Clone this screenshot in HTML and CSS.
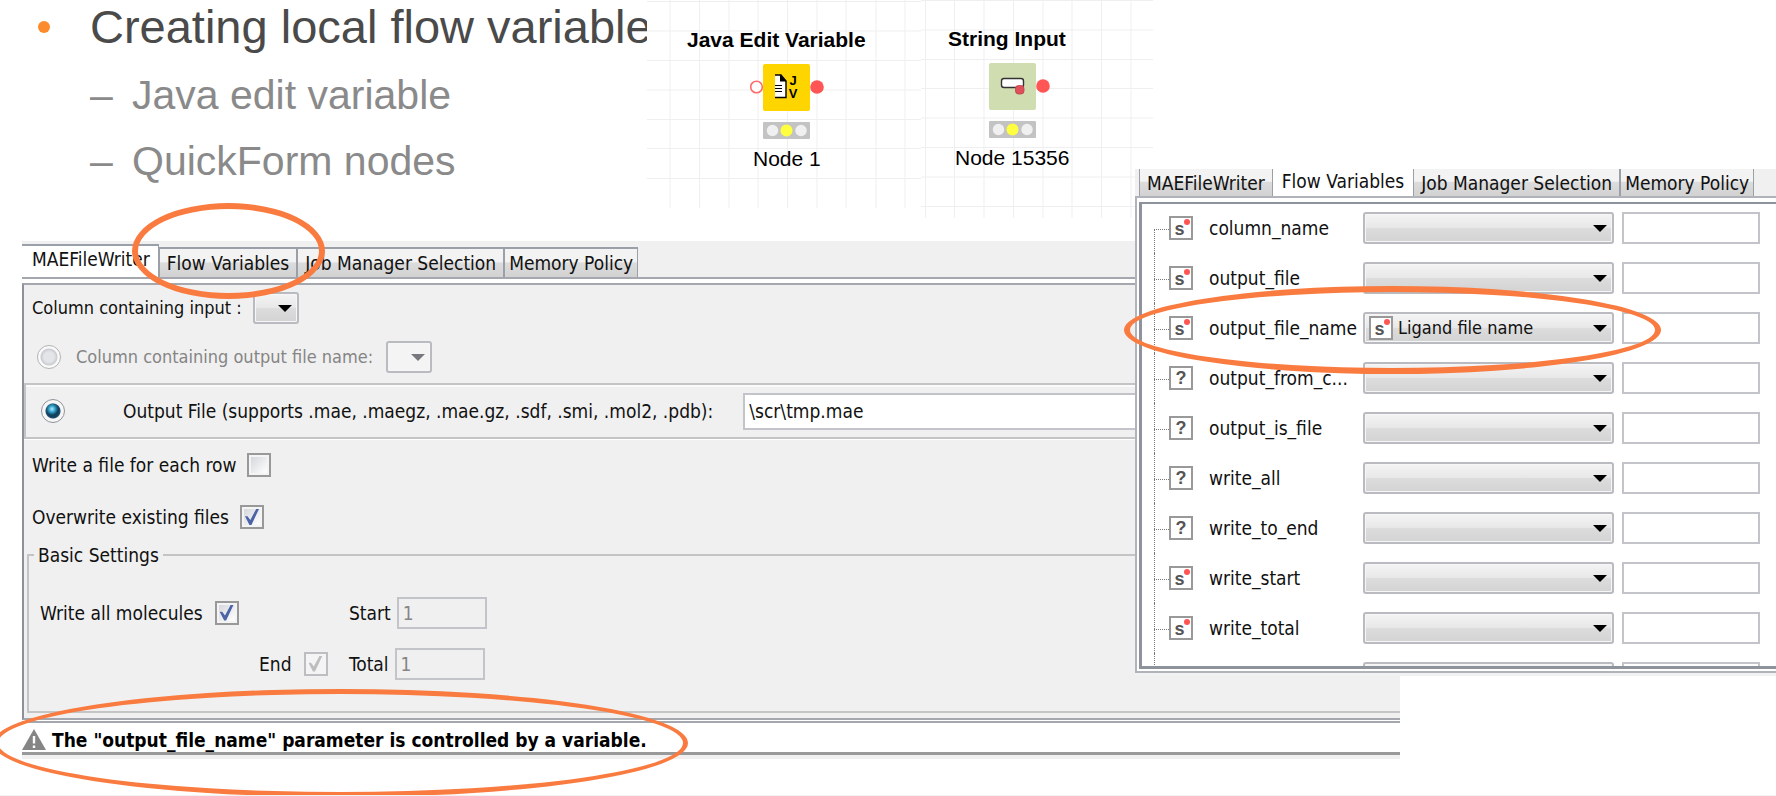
FILE: index.html
```html
<!DOCTYPE html>
<html lang="en">
<head>
<meta charset="utf-8">
<title>Creating local flow variables</title>
<link rel="stylesheet" href="styles.css">
</head>
<body>
<main class="slide">
  <ul class="outline">
    <li class="topic"><h1 class="topic-title">Creating local flow variable</h1>
      <ul class="subtopics">
        <li class="subtopic">Java edit variable</li>
        <li class="subtopic">QuickForm nodes</li>
      </ul>
    </li>
  </ul>

  <section class="canvas canvas-java">
    <svg class="grid" width="274" height="208" aria-hidden="true">
      <path d="M0 1.5H274M0 31H274M0 60.5H274M0 90H274M0 119.500H274M0 148.500H274M0 178.500H274M23 0V208M52.500 0V208M82 0V208M111 0V208M140.500 0V208M170 0V208M199 0V208M229 0V208M258 0V208"/>
    </svg>
    <div class="node node-java">
      <h2 class="node-title">Java Edit Variable</h2>
      <svg class="node-icon" width="74" height="76" viewBox="0 0 74 76" role="img" aria-label="Java Edit Variable node">
        <circle cx="6.500" cy="23" r="5.800" fill="#fff" stroke="#ff6b6b" stroke-width="1.600"/>
        <circle cx="67" cy="23" r="6.800" fill="#ff5555"/>
        <rect x="13" y="0" width="47" height="47" rx="2" fill="#ffd500"/>
        <path d="M25 11H32L36 16V33H25Z" fill="#fff"/>
        <path d="M25 11H31L36 17V33.500H25" fill="none" stroke="#000" stroke-width="1.400"/>
        <path d="M30 10.500V17.500H36.500Z" fill="#000"/>
        <path d="M25 21.500H32M25 24.500H32M25 27.500H32" stroke="#000" stroke-width="1.200"/>
        <text class="glyph" x="43" y="21" text-anchor="middle">J</text>
        <text class="glyph" x="43" y="34" text-anchor="middle">V</text>
        <rect x="13" y="58" width="47" height="17" rx="1" fill="#c3c3c3"/>
        <circle cx="22.500" cy="66.500" r="5.700" fill="#f0f0f0"/>
        <circle cx="36.500" cy="66.500" r="6" fill="#ffff40"/>
        <circle cx="51" cy="66.500" r="5.700" fill="#f0f0f0"/>
      </svg>
      <p class="node-label">Node 1</p>
    </div>
  </section>

  <section class="canvas canvas-string">
    <svg class="grid" width="232" height="218" aria-hidden="true">
      <path d="M0 .5H232M0 30H232M0 59.500H232M0 88.500H232M0 118H232M0 147.500H232M0 177H232M0 206.500H232M4.500 0V218M33.500 0V218M63 0V218M92.500 0V218M122 0V218M151 0V218M180.500 0V218M210 0V218"/>
    </svg>
    <div class="node node-string">
      <h2 class="node-title">String Input</h2>
      <svg class="node-icon" width="74" height="76" viewBox="0 0 74 76" role="img" aria-label="String Input node">
        <circle cx="67" cy="23" r="6.800" fill="#ff5555"/>
        <rect x="13" y="0" width="47" height="47" rx="2" fill="#d0ddb0"/>
        <rect x="25.500" y="15.500" width="22" height="9" rx="2.500" fill="#fff" stroke="#333" stroke-width="1.400"/>
        <rect x="39.500" y="22.500" width="8.500" height="8.500" rx="3" fill="#e0505a" stroke="#b8444a" stroke-width=".8"/>
        <rect x="13" y="58" width="47" height="17" rx="1" fill="#c3c3c3"/>
        <circle cx="22.500" cy="66.500" r="5.700" fill="#f0f0f0"/>
        <circle cx="36.500" cy="66.500" r="6" fill="#ffff40"/>
        <circle cx="51" cy="66.500" r="5.700" fill="#f0f0f0"/>
      </svg>
      <p class="node-label">Node 15356</p>
    </div>
  </section>

  <section class="dialog">
    <nav class="tabs">
      <button class="tab tab-active" type="button">MAEFileWriter</button>
      <button class="tab" type="button">Flow Variables</button>
      <button class="tab" type="button">Job Manager Selection</button>
      <button class="tab" type="button">Memory Policy</button>
    </nav>
    <div class="panel">
      <form class="settings">
        <div class="row row-first">
          <label for="incol">Column containing input :</label>
          <span class="combo combo-small"><select id="incol"><option></option></select></span>
        </div>
        <div class="row row-column">
          <input class="radio" type="radio" name="target" id="bycol" disabled>
          <label class="muted" for="bycol">Column containing output file name:</label>
          <span class="combo combo-small combo-disabled"><select aria-label="Output file name column" disabled><option></option></select></span>
        </div>
        <div class="row row-file">
          <input class="radio" type="radio" name="target" id="byfile" checked>
          <label class="file-label" for="byfile">Output File (supports .mae, .maegz, .mae.gz, .sdf, .smi, .mol2, .pdb):</label>
          <input class="field file-field" type="text" value="\scr\tmp.mae" aria-label="Output file">
        </div>
        <div class="row row-check">
          <label for="each">Write a file for each row</label>
          <input class="check" type="checkbox" id="each">
        </div>
        <div class="row row-check">
          <label for="over">Overwrite existing files</label>
          <input class="check" type="checkbox" id="over" checked>
        </div>
        <fieldset class="basic">
          <legend>Basic Settings</legend>
          <div class="basic-grid">
            <div class="pair pair-all">
              <label for="all">Write all molecules</label>
              <input class="check" type="checkbox" id="all" checked>
            </div>
            <div class="pair-field pair-last">
              <label for="start">Start</label>
              <input class="field num" type="text" id="start" value="1" disabled>
            </div>
            <div class="pair pair-end">
              <label for="end">End</label>
              <input class="check" type="checkbox" id="end" checked disabled>
            </div>
            <div class="pair-field pair-last">
              <label for="total">Total</label>
              <input class="field num" type="text" id="total" value="1" disabled>
            </div>
          </div>
        </fieldset>
      </form>
    </div>
    <div class="status">
      <svg class="warn" width="24" height="22" viewBox="0 0 24 22" aria-hidden="true">
        <path d="M12 0L24 21H0Z" fill="#858585"/>
        <path d="M12 7V14.500M12 16.500V19" stroke="#fff" stroke-width="2.400"/>
      </svg>
      <p class="status-text">The "output_file_name" parameter is controlled by a variable.</p>
      <span class="ring ring-status"></span>
    </div>
    <span class="ring ring-tab"></span>
  </section>

  <section class="variables">
    <nav class="tabs tabs-cut">
      <button class="tab" type="button">MAEFileWriter</button>
      <button class="tab tab-active" type="button">Flow Variables</button>
      <button class="tab" type="button">Job Manager Selection</button>
      <button class="tab" type="button">Memory Policy</button>
    </nav>
    <div class="var-frame">
      <ul class="var-list">
        <li class="var"><span class="type type-s">s</span><label for="v1">column_name</label><span class="combo"><select id="v1"><option></option></select></span><input class="field" type="text" aria-label="column_name variable"></li>
        <li class="var"><span class="type type-s">s</span><label for="v2">output_file</label><span class="combo"><select id="v2"><option></option></select></span><input class="field" type="text" aria-label="output_file variable"></li>
        <li class="var"><span class="type type-s">s</span><label for="v3">output_file_name</label><span class="combo combo-typed"><select id="v3"><option>Ligand file name</option></select><span class="type type-s">s</span></span><input class="field" type="text" aria-label="output_file_name variable"></li>
        <li class="var"><span class="type">?</span><label for="v4">output_from_c...</label><span class="combo"><select id="v4"><option></option></select></span><input class="field" type="text" aria-label="output_from_c variable"></li>
        <li class="var"><span class="type">?</span><label for="v5">output_is_file</label><span class="combo"><select id="v5"><option></option></select></span><input class="field" type="text" aria-label="output_is_file variable"></li>
        <li class="var"><span class="type">?</span><label for="v6">write_all</label><span class="combo"><select id="v6"><option></option></select></span><input class="field" type="text" aria-label="write_all variable"></li>
        <li class="var"><span class="type">?</span><label for="v7">write_to_end</label><span class="combo"><select id="v7"><option></option></select></span><input class="field" type="text" aria-label="write_to_end variable"></li>
        <li class="var"><span class="type type-s">s</span><label for="v8">write_start</label><span class="combo"><select id="v8"><option></option></select></span><input class="field" type="text" aria-label="write_start variable"></li>
        <li class="var"><span class="type type-s">s</span><label for="v9">write_total</label><span class="combo"><select id="v9"><option></option></select></span><input class="field" type="text" aria-label="write_total variable"></li>
        <li class="var var-cut"><span></span><span></span><span class="combo"><select aria-label="Next setting"><option></option></select></span><input class="field" type="text" aria-label="Next variable"></li>
      </ul>
    </div>
    <span class="ring ring-var"></span>
  </section>
</main>
</body>
</html>
```

FILE: styles.css
```css
* { box-sizing: border-box; }

body {
  margin: 0;
  background: #fff;
  color: #111;
  font: 19px/24px "DejaVu Sans Condensed", "DejaVu Sans", sans-serif;
}

h1, h2, p, ul { margin: 0; padding: 0; font-weight: normal; }
ul { list-style: none; }
button, input, select { font: inherit; color: inherit; margin: 0; }

.slide {
  position: relative;
  min-height: 100vh;
  overflow: hidden;
  border-bottom: 1px solid #f2f2f2;
}

/* Outline text */
.outline { font-family: "Liberation Sans", Arial, sans-serif; }
.topic { padding-left: 90px; position: relative; }
.topic::before {
  content: "";
  position: absolute;
  left: 38px;
  top: 21px;
  width: 12px;
  height: 12px;
  border-radius: 50%;
  background: #fb8b2c;
}
.topic-title { font-size: 47px; line-height: 54px; color: #4a4a4a; white-space: nowrap; }
.subtopics { padding-top: 8px; }
.subtopic { display: flex; font-size: 41px; line-height: 66px; color: #8a8a8a; }
.subtopic::before { content: "–"; width: 42px; }

/* Workflow canvases */
.canvas { position: absolute; top: 0; background: #fff; font-family: "Liberation Sans", Arial, sans-serif; color: #000; }
.canvas-java { left: 647px; width: 274px; height: 208px; }
.canvas-string { left: 921px; width: 232px; height: 218px; }
.grid { display: block; }
.grid path { stroke: #efefef; stroke-width: 1; fill: none; }
.node { position: absolute; display: flex; flex-direction: column; align-items: flex-start; font-size: 21px; line-height: 24px; white-space: nowrap; }
.node-java { left: 40px; top: 28px; }
.node-string { left: 27px; top: 27px; }
.node-title { font-size: 21px; font-weight: bold; }
.node-icon { display: block; margin-top: 12px; }
.node-label { margin-top: 7px; }
.node-java .node-icon { margin-left: 63px; }
.node-java .node-label { margin-left: 66px; }
.node-string .node-icon { margin-left: 28px; }
.node-string .node-label { margin-left: 7px; }
.glyph { font: bold 13px "Liberation Sans", Arial, sans-serif; }

/* Tabs */
.tabs { display: flex; align-items: flex-end; height: 36px; background: #f0f0f0; }
.tab {
  height: 30px;
  padding: 0 7px;
  border: 2px solid #9a9fa8;
  border-bottom: 0;
  border-left-width: 1px;
  border-right-width: 1px;
  background: linear-gradient(#f3f3f3 45%, #dcdcdc 50%, #d2d2d2);
  white-space: nowrap;
}
.tab:last-child { padding: 0 4px; }
.tab-active { height: 33px; padding: 0 8px 6px 10px; background: #fff; }
.tabs-cut { height: 27px; }
.tabs-cut .tab { height: 27px; border-top: 0; }
.tabs-cut .tab:first-child { margin-left: 4px; }
.tabs-cut .tab-active { padding: 0 9px 4px; border: 0; }

/* Form controls */
.combo { position: relative; display: block; height: 32px; font-size: 18px; }
.combo select {
  appearance: none;
  display: block;
  width: 100%;
  height: 100%;
  padding: 0 8px;
  border: 2px solid #b9bbc0;
  border-radius: 3px;
  background: linear-gradient(#f4f4f4, #e8e8e8 48%, #dcdcdc 52%, #d3d3d3);
  box-shadow: inset 0 0 0 1px #f6f6f6;
}
.combo::after {
  content: "";
  position: absolute;
  right: 7px;
  top: 13px;
  border: 7px solid transparent;
  border-top-color: #000;
  border-bottom: 0;
  pointer-events: none;
}
.combo-small { width: 46px; }
.combo-disabled select { background: #f4f4f4; opacity: 1; }
.combo-disabled::after { border-top-color: #77797f; }
.combo-typed select { padding-left: 33px; }
.combo-typed .type { position: absolute; left: 6px; top: 4px; }

.field { min-width: 0; width: 100%; height: 32px; padding: 0 4px; border: 2px solid #c3c4c9; border-radius: 0; background: #fff; }
.field:disabled { background: #f0f0f0; color: #858585; }

.check {
  appearance: none;
  position: relative;
  width: 24px;
  height: 24px;
  border: 2px solid #999;
  background: linear-gradient(135deg, #cfd2d8, #fafafa 80%);
  box-shadow: inset 0 0 0 2px #f4f4f4;
}
.check:checked::after {
  content: "";
  position: absolute;
  left: 3px;
  top: 2px;
  width: 14px;
  height: 16px;
  background: #4c63a8;
  clip-path: polygon(0 46%, 18% 46%, 38% 68%, 80% 0, 100% 0, 46% 100%, 32% 100%);
}
.check:disabled { border-color: #bcbec2; background: #f4f4f4; }
.check:disabled::after { background: #bdbdbd; }

.radio {
  appearance: none;
  width: 24px;
  height: 24px;
  border: 1px solid #8f959c;
  border-radius: 50%;
  background: radial-gradient(circle, #e4e5e9 0 5px, #c9ccd0 8px, #fafafa 9px);
}
.radio:checked { background: radial-gradient(circle at 10px 9px, #b5eafa 0, #35a5d0 3px, transparent 6px), radial-gradient(circle, #10425f 0 6px, #24506c 7px, #f6f6f6 8px); }
.radio:disabled { border-color: #b3b3b5; }

/* Writer dialog */
.dialog { position: absolute; left: 22px; right: 376px; top: 241px; background: #f0f0f0; }
.dialog .tab:first-child { border-left: 0; }
.panel { border-top: 2px solid #a4a7ae; padding: 4px 0 1px; background: #fff; }
.settings { padding-bottom: 5px; border: 2px solid #a4a7ae; border-left-color: #8c919b; border-right: 0; background: #f0f0f0; }
.row { display: flex; align-items: center; white-space: nowrap; }
.row-first { height: 45px; padding-left: 8px; gap: 11px; font-size: 18px; }
.row-column { height: 53px; padding-left: 13px; font-size: 18px; }
.row-column label { margin: 0 13px 0 15px; }
.row-file { height: 56px; padding-left: 15px; border: 2px solid #c4c4c4; border-right: 0; box-shadow: inset 0 2px #fafafa, 0 1px #fff; }
.file-label { margin: 0 30px 0 58px; }
.file-field { flex: 1; height: 37px; }
.row-check { height: 52px; padding-left: 8px; gap: 11px; }
.muted { color: #858585; }
.basic { margin: 2px 0 0 3px; padding: 22px 0 22px 11px; border: 2px solid #c4c4c4; border-right: 0; min-width: 0; }
.basic legend { margin-left: -6px; padding: 0 4px; line-height: 20px; }
.basic-grid { display: grid; grid-template-columns: 219px 90px auto; grid-auto-rows: 51px; justify-content: start; align-items: center; }
.pair, .pair-field { display: flex; align-items: center; gap: 12px; }
.pair-field { gap: 6px; }
.pair-end { grid-column: 2; }
.pair-last { grid-column: 3; }
.num { width: 90px; }

.status {
  position: relative;
  display: flex;
  align-items: center;
  gap: 6px;
  height: 34px;
  padding-top: 5px;
  border-top: 2px solid #a4a7ae;
  border-bottom: 3px solid #999;
  background: #fff;
  box-shadow: 0 4px #f0f0f0;
}
.status-text { font-weight: bold; color: #000; white-space: nowrap; }

/* Flow variables window */
.variables { position: absolute; left: 1135px; right: 0; top: 169px; background: #fff; }
.var-frame { height: 477px; padding: 4px 0 2px 2px; border: 2px solid #b0b3ba; border-right: 0; background: #fff; box-shadow: 0 3px #f2f2f2; }
.var-list { height: 100%; overflow: hidden; border: 3px solid #8d929b; border-top-width: 2px; border-right: 0; }
.var { position: relative; display: grid; grid-template-columns: 40px 154px minmax(0, 1fr) 146px; align-items: center; height: 50px; padding: 0 16px 0 27px; }
.var:first-child { margin-top: -1px; }
.var .field { justify-self: end; width: 138px; }
.var::before { content: ""; position: absolute; left: 12px; top: 0; height: 50px; border-left: 1px dotted #777; }
.var::after { content: ""; position: absolute; left: 12px; top: 26px; width: 15px; border-top: 1px dotted #777; }
.var:first-child::before { top: 26px; height: 24px; }
.var-cut::after { display: none; }
.type { position: relative; width: 24px; height: 24px; border: 2px solid #999; background: #fff; color: #555; font: bold 18px/20px "Liberation Sans", Arial, sans-serif; text-align: center; }
.type-s { padding-right: 3px; line-height: 22px; }
.type-s::after { content: ""; position: absolute; right: 1px; top: 1px; width: 6px; height: 6px; border-radius: 50%; background: #ff5555; }

/* Highlight ellipses */
.ring { position: absolute; border: 6px solid #f97b40; border-radius: 50%; pointer-events: none; }
.ring-tab { left: 110px; top: -38px; width: 193px; height: 96px; }
.ring-status { left: -29px; top: -34px; width: 695px; height: 108px; border-width: 5px; }
.ring-var { left: -11px; top: 117px; width: 537px; height: 88px; }
```
